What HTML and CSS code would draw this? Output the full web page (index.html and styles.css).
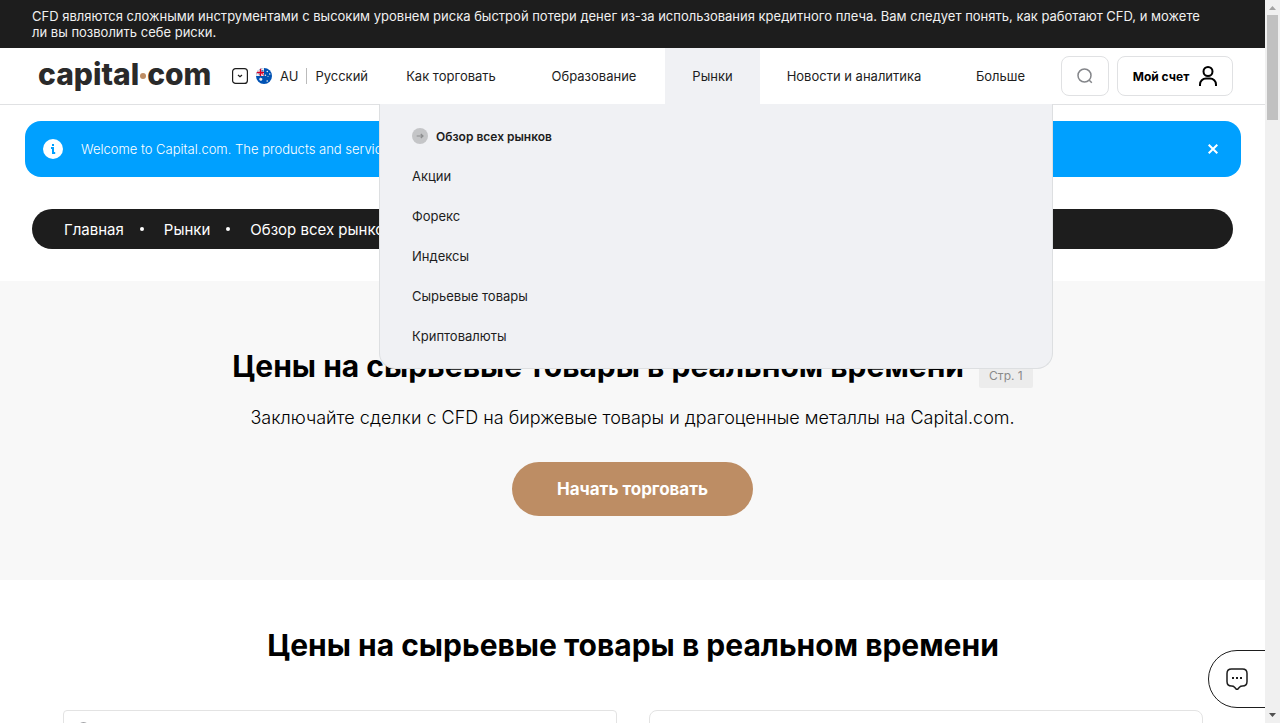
FILE: index.html
```html
<!DOCTYPE html>
<html lang="ru">
<head>
<meta charset="utf-8">
<title>Цены на сырьевые товары в реальном времени</title>
<link rel="stylesheet" href="styles.css">
</head>
<body>
<div class="page">
  <p class="risk">CFD являются сложными инструментами с высоким уровнем риска быстрой потери денег из-за использования кредитного плеча. Вам следует понять, как работают CFD, и можете<br>ли вы позволить себе риски.</p>

  <header class="header">
    <div class="brand">
      <a class="logo" href="#" aria-label="capital.com">capital<span class="logo-dot"></span>com</a>
      <button class="locale" type="button">
        <svg class="locale-box" viewBox="0 0 16 16" aria-hidden="true"><rect x=".6" y=".6" width="14.8" height="14.8" rx="3" fill="none" stroke="#1d1d1d" stroke-width="1.2"/><path d="M6 7l2 1.8L10 7" fill="none" stroke="#1d1d1d" stroke-width="1.2"/></svg>
        <svg class="flag" viewBox="0 0 16 16" aria-hidden="true">
          <clipPath id="round"><circle cx="8" cy="8" r="8"/></clipPath>
          <g clip-path="url(#round)">
            <path fill="#0052b4" d="M0 0h16v16H0z"/>
            <path fill="#f0f0f0" d="M0 0h8v8H0z"/>
            <path fill="#0052b4" d="M5.4 2.2h2v1.4H5.4zM2.2 5.5h1.4v2z"/>
            <path fill="#d80027" d="M3.8 0h1.4v8H3.8zM0 3.8h8v1.4H0zM5.2 5.2L8 8V6.9L6.3 5.2z"/>
            <g fill="#f0f0f0"><path d="M4.8 9.2l.5 1 1.1-.2-.5 1 .8.7-1 .3v1.1l-.9-.7-.9.7v-1.1l-1-.3.8-.7-.5-1 1.1.2z"/><circle cx="11.2" cy="13" r=".8"/><circle cx="9.4" cy="7.3" r=".8"/><circle cx="11.3" cy="3.5" r=".8"/><circle cx="13.7" cy="6" r=".8"/><circle cx="12" cy="8.5" r=".5"/></g>
          </g>
        </svg>
        <span class="country">AU</span>
        <span class="language">Русский</span>
      </button>
    </div>

    <nav class="nav" aria-label="Основное меню">
      <a class="nav-item" href="#">Как торговать</a>
      <a class="nav-item" href="#">Образование</a>
      <a class="nav-item nav-item-open" href="#">Рынки</a>
      <a class="nav-item" href="#">Новости и аналитика</a>
      <a class="nav-item" href="#">Больше</a>
      <div class="menu">
        <a class="menu-link menu-link-main" href="#">
          <svg class="menu-icon" viewBox="0 0 16 16" aria-hidden="true"><circle cx="8" cy="8" r="8" fill="#c4c5c7"/><path d="M4.7 8h6.2M8.8 6l2.2 2-2.2 2" fill="none" stroke="#8c8d8f" stroke-width="1.2"/></svg>
          Обзор всех рынков</a>
        <a class="menu-link" href="#">Акции</a>
        <a class="menu-link" href="#">Форекс</a>
        <a class="menu-link" href="#">Индексы</a>
        <a class="menu-link" href="#">Сырьевые товары</a>
        <a class="menu-link" href="#">Криптовалюты</a>
      </div>
    </nav>

    <div class="actions">
      <button class="tool tool-search" type="button" aria-label="Поиск"><svg width="16" height="16" viewBox="0 0 16 16" fill="none" stroke="#84868a" stroke-width="1.5" aria-hidden="true"><circle cx="7.5" cy="7.5" r="6.5"/><path d="M12.3 12.3l2.5 2.5"/></svg></button>
      <button class="tool tool-account" type="button">Мой счет
        <svg width="18" height="20" viewBox="0 0 18 20" fill="none" stroke="#000" stroke-width="2" aria-hidden="true"><circle cx="9" cy="5.5" r="4.5"/><path d="M1 20v-1.500a6 6 0 0 1 6-6h4a6 6 0 0 1 6 6V20"/></svg>
      </button>
    </div>
  </header>

  <main>
    <div class="notice">
      <svg class="notice-icon" width="20" height="20" viewBox="0 0 20 20" aria-hidden="true"><circle cx="10" cy="10" r="10" fill="#fff"/><path fill="#00a0ff" d="M9 5h2v2H9zM8 8h3v5h1.2v2H9v-5H8z"/></svg>
      <p class="notice-text">Welcome to Capital.com. The products and services</p>
      <button class="notice-close" type="button" aria-label="Закрыть"><svg width="10" height="10" viewBox="0 0 10 10" stroke="#fff" stroke-width="2" aria-hidden="true"><path d="M.7.7l8.6 8.6M9.3.7L.7 9.3"/></svg></button>
    </div>

    <nav class="crumbs" aria-label="Навигация">
      <a class="crumb" href="#">Главная</a>
      <a class="crumb" href="#">Рынки</a>
      <a class="crumb" href="#">Обзор всех рынков</a>
    </nav>

    <section class="hero">
      <h1 class="title">Цены на сырьевые товары в реальном времени <span class="page-tag">Стр. 1</span></h1>
      <p class="lead">Заключайте сделки с CFD на биржевые товары и драгоценные металлы на Capital.com.</p>
      <button class="cta" type="button">Начать торговать</button>
    </section>

    <section class="prices">
      <h2 class="title">Цены на сырьевые товары в реальном времени</h2>
      <div class="filters">
        <label class="filter">
          <svg width="16" height="16" viewBox="0 0 16 16" fill="none" stroke="#84868a" stroke-width="1.3" aria-hidden="true"><circle cx="7.5" cy="7.5" r="6.6"/><path d="M12.3 12.3l2.5 2.5"/></svg>
          <input class="filter-input" type="text" aria-label="Поиск рынка">
        </label>
        <select class="filter filter-select" aria-label="Категория"></select>
      </div>
    </section>
  </main>

  <button class="chat" type="button" aria-label="Чат"><svg width="22" height="22" viewBox="0 0 22 22" fill="none" stroke="#1d1d1d" stroke-width="1.5" aria-hidden="true"><path d="M5.5 1h11q4.500 0 4.500 4.500v8q0 4.500-4.500 4.500-2 0-2.800 1l-1.400 1.600q-1.300 1.200-2.600 0L8.300 19q-.8-1-2.800-1Q1 18 1 13.500v-8Q1 1 5.500 1z"/><path stroke="none" fill="#1d1d1d" d="M6 9h2v2H6zM10 9h2v2h-2zM14 9h2v2h-2z"/></svg></button>
</div>
<div class="scrollbar" aria-hidden="true">
  <svg class="arrow" viewBox="0 0 15 15"><path fill="#a3a3a3" d="M4 10l3.500-4 3.500 4z"/></svg>
  <div class="thumb"></div>
  <svg class="arrow arrow-down" viewBox="0 0 15 15"><path fill="#505050" d="M4 5h7L7.500 9z"/></svg>
</div>
</body>
</html>
```
FILE: styles.css
```css
* { box-sizing: border-box; }
body {
  margin: 0;
  display: flex;
  height: 100vh;
  overflow: hidden;
  background: #fff;
  color: #1d1d1d;
  font-family: Inter, "Noto Sans", sans-serif;
  font-size: 13px;
}
p, h1, h2 { margin: 0; }
a { color: inherit; text-decoration: none; }
button, input, select { font: inherit; color: inherit; padding: 0; border: 0; background: none; }
svg { flex: none; }
.page { position: relative; flex: 1; min-width: 0; overflow: hidden; }

.risk {
  padding: 8px 32px;
  background: #1d1d1d;
  color: #f0f0f0;
  font-size: 13px;
  line-height: 16px;
}

.header {
  display: flex;
  height: 57px;
  padding: 0 32px;
  border-bottom: 1px solid #e0e1e3;
}
.brand { flex: 0 0 347px; display: flex; align-items: center; padding-left: 6px; }
.logo {
  width: 194px;
  padding-bottom: 4px;
  color: #2a2a2a;
  font-size: 30px;
  font-weight: 800;
  line-height: 40px;
}
.logo-dot {
  display: inline-block;
  width: 6px;
  height: 6px;
  margin: 0 1px;
  border-radius: 50%;
  background: #bd8d64;
  vertical-align: 6px;
}
.locale { display: flex; align-items: center; gap: 8px; white-space: nowrap; }
.locale-box, .flag { width: 16px; height: 16px; }
.language { padding-left: 8px; border-left: 1px solid #bbb; }

.nav {
  position: relative;
  flex: 1;
  display: grid;
  grid-template-columns: 144fr 142fr 95fr 188fr 105fr;
  white-space: nowrap;
}
.nav-item { display: flex; align-items: center; justify-content: center; }
.nav-item-open { background: #f0f1f4; }
.menu {
  position: absolute;
  top: 100%;
  left: 0;
  right: 0;
  z-index: 2;
  padding: 12px 32px;
  background: #f0f1f4;
  border: 1px solid #dddfe1;
  border-top: 0;
  border-radius: 0 0 16px 16px;
}
.menu-link { display: flex; align-items: center; gap: 8px; height: 40px; }
.menu-link-main { font-size: 12px; font-weight: 600; }
.menu-icon { width: 16px; height: 16px; }

.actions { display: flex; align-items: center; gap: 8px; padding-left: 8px; }
.tool {
  display: flex;
  align-items: center;
  justify-content: center;
  height: 40px;
  border: 1px solid #e0e1e3;
  border-radius: 8px;
}
.tool-search { width: 48px; }
.tool-account { width: 116px; gap: 10px; color: #000; font-size: 12px; font-weight: 700; white-space: nowrap; }

.notice {
  display: flex;
  align-items: center;
  height: 56px;
  margin: 16px 24px 32px 25px;
  padding: 0 23px 0 18px;
  border-radius: 16px;
  background: #00a0ff;
  color: #fff;
}
.notice-text { flex: 1; padding-left: 18px; font-weight: 300; }
.notice-close { display: flex; }

.crumbs {
  display: flex;
  align-items: center;
  height: 40px;
  margin: 0 32px 32px;
  padding: 0 32px;
  border-radius: 20px;
  background: #1d1d1d;
  color: #fff;
  font-size: 15px;
}
.crumb { display: flex; align-items: center; }
.crumb + .crumb::before {
  content: "";
  width: 4px;
  height: 4px;
  margin: 0 20px 0 16px;
  border-radius: 50%;
  background: #fff;
}

.title { color: #000; font-size: 30px; font-weight: 700; line-height: 40px; }
.hero {
  display: flex;
  flex-direction: column;
  align-items: center;
  padding: 65px 32px 64px;
  background: #f8f8f8;
  color: #000;
}
.page-tag {
  display: inline-block;
  margin-left: 8px;
  padding: 0 10px;
  border-radius: 2px;
  background: #ececec;
  color: #8a8a8a;
  font-size: 12px;
  font-weight: 400;
  line-height: 24px;
  vertical-align: -3px;
}
.lead { padding: 18px 0 32px; font-size: 18px; font-weight: 300; line-height: 24px; }
.cta {
  height: 54px;
  padding: 0 45px;
  border-radius: 27px;
  background: #bd8d64;
  color: #fff;
  font-size: 17px;
  font-weight: 700;
}

.prices { padding: 45px 62px 0 63px; text-align: center; }
.filters { display: grid; grid-template-columns: 1fr 1fr; gap: 32px; padding-top: 45px; }
.filter {
  display: flex;
  align-items: center;
  width: 100%;
  height: 40px;
  padding: 0 12px;
  border: 1px solid #e3e3e3;
  border-radius: 4px;
}
.filter-input { flex: 1; }
.filter-select { appearance: none; border-radius: 8px; }

.chat {
  position: absolute;
  right: -1px;
  bottom: 15px;
  width: 58px;
  height: 58px;
  padding-left: 17px;
  border: 1px solid #1d1d1d;
  border-radius: 29px 0 0 29px;
  background: #fff;
  text-align: left;
}
.chat svg { display: block; }

.scrollbar { flex: none; width: 15px; display: flex; flex-direction: column; background: #f0f0f0; }
.arrow { width: 15px; height: 15px; }
.arrow-down { margin-top: auto; }
.thumb { height: 105px; margin: 0 2px; background: #c1c1c1; }
```
